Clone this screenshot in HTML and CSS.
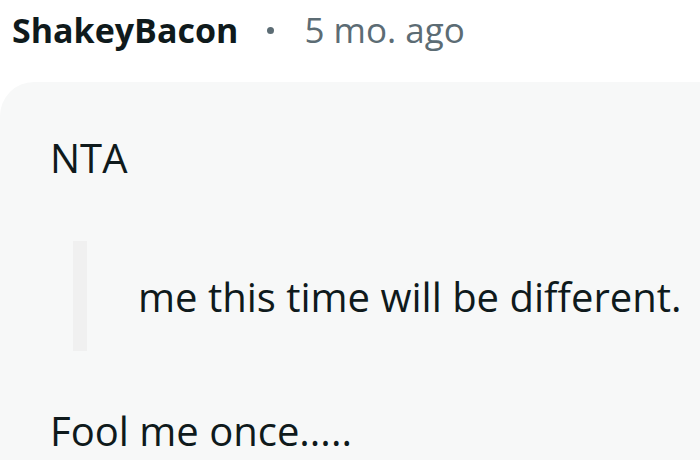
FILE: index.html
```html
<!DOCTYPE html>
<html lang="en">
<head>
<meta charset="utf-8">
<title>Comment</title>
<link rel="stylesheet" href="styles.css">
</head>
<body>
<article class="comment">
  <header class="meta">
    <span class="author">ShakeyBacon</span>
    <span class="sep" aria-hidden="true"></span>
    <time class="time">5 mo. ago</time>
  </header>
  <div class="card">
    <p class="para">NTA</p>
    <blockquote class="quote"><p class="quote-text">me this time will be different.</p></blockquote>
    <p class="para">Fool me once.....</p>
  </div>
</article>
</body>
</html>
```
FILE: styles.css
```css
html, body {
  margin: 0;
  padding: 0;
  background: #ffffff;
  overflow: hidden;
}
body {
  width: 700px;
  height: 460px;
  font-family: "Open Sans", "Noto Sans", sans-serif;
  color: #0f1a1c;
}
.comment {
  display: flex;
  flex-direction: column;
}
.meta {
  display: flex;
  align-items: center;
  height: 60px;
  padding-left: 12px;
  line-height: 60px;
}
.author {
  font-size: 34px;
  font-weight: 700;
  color: #0f1a1c;
}
.sep {
  width: 7px;
  height: 7px;
  border-radius: 50%;
  background: #5c6c74;
  margin: 0 30px 0 29px;
}
.time {
  font-size: 35px;
  color: #5c6c74;
}
.card {
  margin-top: 22px;
  background: #f7f8f8;
  border-top-left-radius: 34px;
  padding: 48px 0 40px 50px;
  min-height: 400px;
  font-size: 40px;
  line-height: 56px;
}
.para {
  margin: 0;
}
.quote {
  margin: 55px 0 52px 23px;
  border-left: 14px solid #f0f0f0;
  padding: 28px 0 26px 51px;
}
.quote-text {
  margin: 0;
}
```
